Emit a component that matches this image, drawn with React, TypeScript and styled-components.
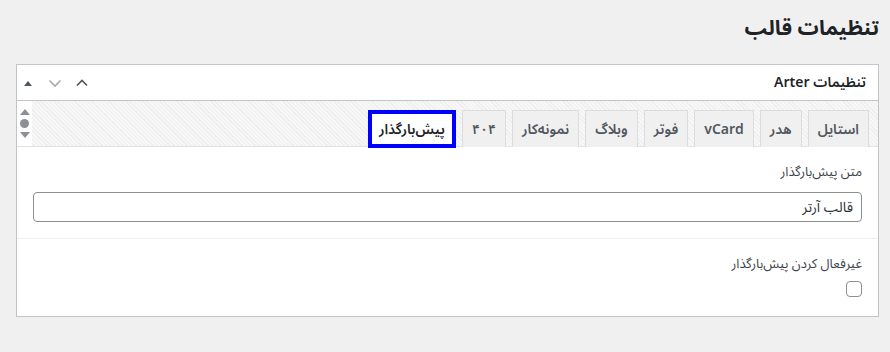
import React from "react";
import styled, { createGlobalStyle } from "styled-components";

const Global = createGlobalStyle`
  html, body { margin: 0; padding: 0; background: #f0f0f1; }
  body {
    font-family: "Noto Sans Arabic", "Vazirmatn", "DejaVu Sans", "Noto Sans", sans-serif;
    color: #3c434a;
  }
  * { box-sizing: border-box; }
`;

const Page = styled.div`
  direction: rtl;
  padding: 0 11px 0 16px;
`;

const Title = styled.h1`
  margin: 0 0 21px;
  padding-top: 13px;
  font-size: 21px;
  line-height: 30px;
  font-weight: 700;
  color: #1d2327;
`;

const Box = styled.div`
  background: #fff;
  border: 1px solid #c3c4c7;
`;

const Header = styled.div`
  display: flex;
  align-items: center;
  justify-content: space-between;
  height: 36px;
  border-bottom: 1px solid #c3c4c7;
  padding-right: 12px;
`;

const HeaderTitle = styled.h2`
  margin: 0;
  font-size: 14px;
  font-weight: 600;
  color: #1d2327;
`;

const IconGroup = styled.div`
  display: flex;
  align-items: center;
  gap: 13px;
  padding-left: 4px;
`;

const IconBtn = styled.span<{ $color: string }>`
  display: flex;
  width: 14px;
  height: 14px;
  color: ${(p) => p.$color};
`;

const TabBar = styled.div`
  display: flex;
  align-items: stretch;
  height: 46px;
  border-bottom: 1px solid #e2e2e2;
  background-color: #f7f7f7;
  background-image: repeating-linear-gradient(45deg, #eeeeee 0 1px, transparent 1px 3px);
`;

const TabList = styled.div`
  display: flex;
  align-items: flex-end;
  gap: 6px;
  padding: 9px 9px 0 0;
`;

const Tab = styled.div<{ $active?: boolean }>`
  display: flex;
  align-items: center;
  justify-content: center;
  height: ${(p) => (p.$active ? "38px" : "37px")};
  margin-bottom: ${(p) => (p.$active ? "-2px" : "-1px")};
  padding: 0 ${(p) => (p.$active ? "7px" : "9px")};
  border: ${(p) => (p.$active ? "4px solid #0000ff" : "1px solid #dcdcde")};
  border-bottom-width: ${(p) => (p.$active ? "4px" : "0")};
  background: ${(p) => (p.$active ? "#fff" : "#f0f0f1")};
  font-size: 14px;
  font-weight: 600;
  color: ${(p) => (p.$active ? "#1d2327" : "#50575e")};
  white-space: nowrap;
`;

const Scroller = styled.div`
  margin-right: auto;
  width: 15px;
  background: #fff;
  display: flex;
  flex-direction: column;
  align-items: center;
  justify-content: center;
  gap: 4px;
  color: #8c8f94;
`;

const Dot = styled.span`
  width: 9px;
  height: 9px;
  border-radius: 50%;
  background: #8c8f94;
`;

const Field = styled.div<{ $last?: boolean }>`
  padding: 15px 16px ${(p) => (p.$last ? "19px" : "16px")};
  border-bottom: ${(p) => (p.$last ? "none" : "1px solid #f0f0f1")};
`;

const Label = styled.div`
  font-size: 13px;
  line-height: 20px;
  color: #3c434a;
  margin-bottom: 10px;
`;

const Input = styled.input`
  display: block;
  width: 100%;
  height: 30px;
  border: 1px solid #8c8f94;
  border-radius: 4px;
  padding: 0 8px;
  font: inherit;
  font-size: 14px;
  color: #2c3338;
  background: #fff;
  direction: rtl;
  outline: none;
`;

const Check = styled.span`
  display: block;
  width: 16px;
  height: 16px;
  border: 1px solid #8c8f94;
  border-radius: 4px;
  background: #fff;
  margin-top: -3px;
`;

const tabs = ["استایل", "هدر", "vCard", "فوتر", "وبلاگ", "نمونه‌کار", "۴۰۴"];

export default function App() {
  return (
    <>
      <Global />
      <Page>
        <Title>تنظیمات قالب</Title>
        <Box>
          <Header>
            <HeaderTitle>تنظیمات Arter</HeaderTitle>
            <IconGroup>
              <IconBtn $color="#50575e">
                <svg width="14" height="14" viewBox="0 0 14 14" fill="none" stroke="currentColor" strokeWidth="1.7">
                  <path d="M2 9.5 7 4.5l5 5" />
                </svg>
              </IconBtn>
              <IconBtn $color="#a7aaad">
                <svg width="14" height="14" viewBox="0 0 14 14" fill="none" stroke="currentColor" strokeWidth="1.7">
                  <path d="M1.5 4.5 7 10l5.5-5.5" />
                </svg>
              </IconBtn>
              <IconBtn $color="#50575e">
                <svg width="14" height="14" viewBox="0 0 14 14" fill="currentColor">
                  <path d="M3 10 7 5l4 5z" />
                </svg>
              </IconBtn>
            </IconGroup>
          </Header>
          <TabBar>
            <TabList>
              {tabs.map((t) => (
                <Tab key={t}>{t}</Tab>
              ))}
              <Tab $active>پیش‌بارگذار</Tab>
            </TabList>
            <Scroller>
              <svg width="10" height="6" viewBox="0 0 10 6" fill="currentColor">
                <path d="M0 6 5 0l5 6z" />
              </svg>
              <Dot />
              <svg width="10" height="6" viewBox="0 0 10 6" fill="currentColor">
                <path d="M0 0h10L5 6z" />
              </svg>
            </Scroller>
          </TabBar>
          <Field>
            <Label>متن پیش‌بارگذار</Label>
            <Input defaultValue="قالب آرتر" />
          </Field>
          <Field $last>
            <Label>غیرفعال کردن پیش‌بارگذار</Label>
            <Check />
          </Field>
        </Box>
      </Page>
    </>
  );
}
